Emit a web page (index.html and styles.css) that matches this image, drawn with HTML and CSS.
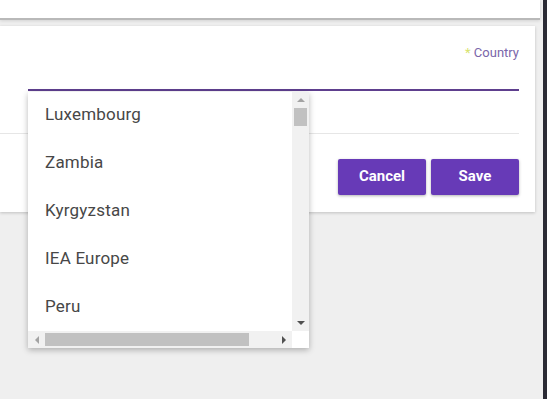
FILE: index.html
```html
<!DOCTYPE html>
<html>
<head>
<meta charset="utf-8">
<link rel="stylesheet" href="styles.css">
</head>
<body>
<div class="screen">
  <div class="main">
    <div class="topbar"></div>
    <div class="card">
      <div class="field">
        <div class="label"><span class="req">*</span> Country</div>
      </div>
      <div class="divider"></div>
      <div class="actions">
        <button class="btn">Cancel</button>
        <button class="btn">Save</button>
      </div>
    </div>
    <div class="dropdown">
      <div class="list">
        <div class="item">Luxembourg</div>
        <div class="item">Zambia</div>
        <div class="item">Kyrgyzstan</div>
        <div class="item">IEA Europe</div>
        <div class="item">Peru</div>
      </div>
      <div class="vscroll">
        <span class="arr up"></span>
        <div class="vtrack"><div class="vthumb"></div></div>
        <span class="arr down"></span>
      </div>
      <div class="hscroll">
        <span class="arr left"></span>
        <div class="htrack"><div class="hthumb"></div></div>
        <span class="arr right"></span>
      </div>
      <div class="corner"></div>
    </div>
  </div>
  <div class="edge"></div>
</div>
</body>
</html>
```
FILE: styles.css
```css
html, body {
  margin: 0;
  padding: 0;
  width: 547px;
  height: 399px;
  overflow: hidden;
  background: #eeeeee;
  font-family: Roboto, "Noto Sans", sans-serif;
}
.screen {
  display: flex;
  width: 547px;
  height: 399px;
}
.main {
  position: relative;
  flex: 1;
  display: flex;
  flex-direction: column;
  background: #efefef;
}
.edge {
  width: 4px;
  background: #2b2b35;
  box-shadow: -3px 0 5px rgba(0,0,0,0.18);
}
.topbar {
  height: 18px;
  margin-right: 3px;
  background: #ffffff;
  border-bottom: 2px solid #b9b9b9;
  box-shadow: 0 1px 3px rgba(0,0,0,0.12);
}
.card {
  margin-top: 6px;
  margin-right: 8px;
  background: #ffffff;
  box-shadow: 0 1px 3px rgba(0,0,0,0.2);
  display: flex;
  flex-direction: column;
  padding-bottom: 17px;
}
.field {
  margin-left: 28px;
  margin-right: 16px;
  border-bottom: 2px solid #5e3f8e;
  display: flex;
  flex-direction: column;
  align-items: flex-end;
  padding-top: 20px;
  height: 43px;
}
.label {
  font-size: 13px;
  line-height: 14px;
  color: #7a66aa;
}
.req {
  color: #d7e36e;
}
.divider {
  height: 1px;
  margin-top: 42px;
  margin-right: 16px;
  background: #e6e6e6;
}
.actions {
  display: flex;
  justify-content: flex-end;
  gap: 5px;
  margin-top: 25px;
  padding-right: 16px;
}
.btn {
  width: 88px;
  height: 36px;
  border: none;
  border-radius: 2px;
  background: #673ab7;
  color: #ffffff;
  font-family: Roboto, sans-serif;
  font-weight: 700;
  font-size: 15px;
  box-shadow: 0 1px 3px rgba(0,0,0,0.3);
  padding: 0 0 3px 0;
}
.dropdown {
  position: absolute;
  left: 28px;
  top: 92px;
  width: 281px;
  height: 256px;
  background: #ffffff;
  box-shadow: 0 2px 6px rgba(0,0,0,0.28);
  display: grid;
  grid-template-columns: 264px 17px;
  grid-template-rows: 239px 17px;
}
.list {
  overflow: hidden;
  margin-top: -2px;
}
.item {
  height: 48px;
  line-height: 48px;
  padding-left: 17px;
  font-size: 17px;
  letter-spacing: 0.2px;
  color: #474747;
}
.vscroll {
  background: #f1f1f1;
  display: flex;
  flex-direction: column;
}
.vtrack {
  flex: 1;
  padding: 0 2px;
}
.vthumb {
  height: 18px;
  background: #c1c1c1;
}
.hscroll {
  background: #f1f1f1;
  display: flex;
}
.htrack {
  flex: 1;
  padding: 2px 0;
}
.hthumb {
  width: 204px;
  height: 13px;
  background: #c1c1c1;
}
.corner {
  background: #ffffff;
}
.arr {
  width: 17px;
  height: 16px;
  flex: none;
  display: flex;
  align-items: center;
  justify-content: center;
}
.arr::before {
  content: "";
  width: 0;
  height: 0;
  border: 4px solid transparent;
}
.up::before {
  border-bottom-color: #a3a3a3;
  border-top-width: 0;
}
.down::before {
  border-top-color: #505050;
  border-bottom-width: 0;
}
.left::before {
  border-right-color: #a3a3a3;
  border-left-width: 0;
}
.right::before {
  border-left-color: #505050;
  border-right-width: 0;
}
.hscroll .arr {
  width: 17px;
  height: 17px;
}
```
